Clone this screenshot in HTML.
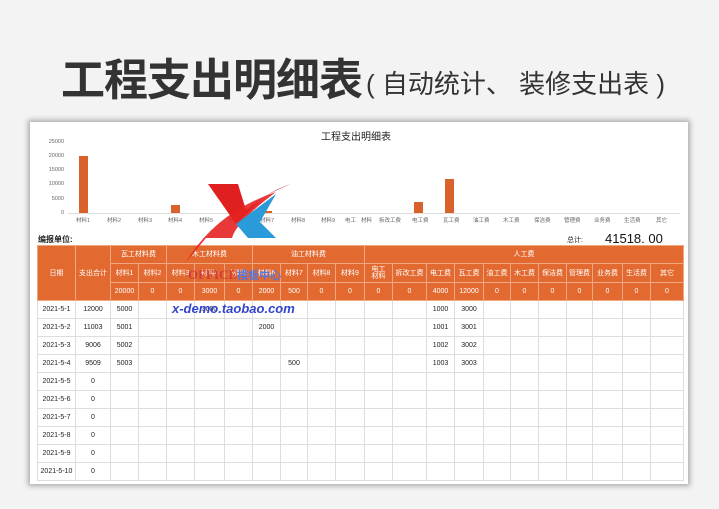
<!DOCTYPE html>
<html><head><meta charset="utf-8"><style>
*{margin:0;padding:0;box-sizing:border-box}
body{width:719px;height:509px;background:#f3f3f3;font-family:"Liberation Sans","Noto Sans CJK SC",sans-serif;position:relative;overflow:hidden}
.a{position:absolute;white-space:nowrap}
#card{position:absolute;left:30px;top:122px;width:658px;height:362px;background:#fff;box-shadow:0 0 5px 2px #aaa}
table{position:absolute;left:37px;top:245px;border-collapse:collapse;table-layout:fixed;font-size:7px;line-height:7px}
td{text-align:center;vertical-align:middle;border:1px solid #ddd;color:#222;height:18px;overflow:hidden;white-space:nowrap;padding:0}
tr.h td{background:#e2692f;color:#fff;border:1px solid #f0a67e}
.yl{font-size:5.5px;color:#666;text-align:right;width:20px}
.xl{font-size:5.5px;color:#666}
.bar{position:absolute;background:#d9622b}
</style></head><body>
<div class="a" style="left:61px;top:44px;font-size:44px;font-weight:bold;color:#333;letter-spacing:-1px">工程支出明细表</div>
<div class="a" style="left:366px;top:64px;font-size:26px;color:#333">( 自动统计、 装修支出表 )</div>
<div id="card"></div>
<div class="a" style="left:321px;top:128px;font-size:10px;color:#222">工程支出明细表</div>
<div class="a yl" style="left:44px;top:139px">25000</div>
<div class="a yl" style="left:44px;top:153px">20000</div>
<div class="a yl" style="left:44px;top:167px">15000</div>
<div class="a yl" style="left:44px;top:181px">10000</div>
<div class="a yl" style="left:44px;top:196px">5000</div>
<div class="a yl" style="left:44px;top:210px">0</div>
<div class="a" style="left:68px;top:213px;width:612px;height:1px;background:#ddd"></div>
<div class="bar" style="left:79px;top:156px;width:9px;height:57px"></div>
<div class="bar" style="left:171px;top:205px;width:9px;height:8px"></div>
<div class="bar" style="left:263px;top:211px;width:9px;height:2px"></div>
<div class="bar" style="left:414px;top:202px;width:9px;height:11px"></div>
<div class="bar" style="left:445px;top:179px;width:9px;height:34px"></div>
<div class="a xl" style="left:76px;top:216px">材料1</div>
<div class="a xl" style="left:107px;top:216px">材料2</div>
<div class="a xl" style="left:138px;top:216px">材料3</div>
<div class="a xl" style="left:168px;top:216px">材料4</div>
<div class="a xl" style="left:199px;top:216px">材料5</div>
<div class="a xl" style="left:229px;top:216px">材料6</div>
<div class="a xl" style="left:260px;top:216px">材料7</div>
<div class="a xl" style="left:291px;top:216px">材料8</div>
<div class="a xl" style="left:321px;top:216px">材料9</div>
<div class="a xl" style="left:345px;top:216px">电工</div>
<div class="a xl" style="left:361px;top:216px">材料</div>
<div class="a xl" style="left:379px;top:216px">拆改工费</div>
<div class="a xl" style="left:412px;top:216px">电工费</div>
<div class="a xl" style="left:443px;top:216px">瓦工费</div>
<div class="a xl" style="left:473px;top:216px">油工费</div>
<div class="a xl" style="left:503px;top:216px">木工费</div>
<div class="a xl" style="left:534px;top:216px">保洁费</div>
<div class="a xl" style="left:564px;top:216px">管理费</div>
<div class="a xl" style="left:594px;top:216px">业务费</div>
<div class="a xl" style="left:624px;top:216px">生活费</div>
<div class="a xl" style="left:656px;top:216px">其它</div>
<div class="a" style="left:38px;top:234px;font-size:8px;font-weight:bold;color:#222">编报单位:</div>
<div class="a" style="left:567px;top:235px;font-size:7px;color:#222">总计:</div>
<div class="a" style="left:605px;top:231px;font-size:13px;color:#111">41518. 00</div>
<table>
<colgroup><col style="width:38px"><col style="width:35px"><col style="width:28px"><col style="width:28px"><col style="width:28px"><col style="width:30px"><col style="width:28px"><col style="width:28px"><col style="width:27px"><col style="width:28px"><col style="width:29px"><col style="width:28px"><col style="width:34px"><col style="width:28px"><col style="width:29px"><col style="width:27px"><col style="width:28px"><col style="width:28px"><col style="width:26px"><col style="width:30px"><col style="width:28px"><col style="width:33px"></colgroup>
<tr class="h"><td rowspan="3">日期</td><td rowspan="3">支出合计</td><td colspan="2" style="height:16px">瓦工材料费</td><td colspan="3">木工材料费</td><td colspan="4">油工材料费</td><td colspan="11">人工费</td></tr>
<tr class="h"><td style="height:19px">材料1</td><td>材料2</td><td>材料3</td><td>材料4</td><td>材料5</td><td>材料6</td><td>材料7</td><td>材料8</td><td>材料9</td><td style="line-height:7px">电工<br>材料</td><td>拆改工费</td><td>电工费</td><td>瓦工费</td><td>油工费</td><td>木工费</td><td>保洁费</td><td>管理费</td><td>业务费</td><td>生活费</td><td>其它</td></tr>
<tr class="h"><td style="height:13px">20000</td><td>0</td><td>0</td><td>3000</td><td>0</td><td>2000</td><td>500</td><td>0</td><td>0</td><td>0</td><td>0</td><td>4000</td><td>12000</td><td>0</td><td>0</td><td>0</td><td>0</td><td>0</td><td>0</td><td>0</td></tr>
<tr><td>2021-5-1</td><td>12000</td><td>5000</td><td></td><td></td><td>3000</td><td></td><td></td><td></td><td></td><td></td><td></td><td></td><td>1000</td><td>3000</td><td></td><td></td><td></td><td></td><td></td><td></td><td></td></tr>
<tr><td>2021-5-2</td><td>11003</td><td>5001</td><td></td><td></td><td></td><td></td><td>2000</td><td></td><td></td><td></td><td></td><td></td><td>1001</td><td>3001</td><td></td><td></td><td></td><td></td><td></td><td></td><td></td></tr>
<tr><td>2021-5-3</td><td>9006</td><td>5002</td><td></td><td></td><td></td><td></td><td></td><td></td><td></td><td></td><td></td><td></td><td>1002</td><td>3002</td><td></td><td></td><td></td><td></td><td></td><td></td><td></td></tr>
<tr><td>2021-5-4</td><td>9509</td><td>5003</td><td></td><td></td><td></td><td></td><td></td><td>500</td><td></td><td></td><td></td><td></td><td>1003</td><td>3003</td><td></td><td></td><td></td><td></td><td></td><td></td><td></td></tr>
<tr><td>2021-5-5</td><td>0</td><td></td><td></td><td></td><td></td><td></td><td></td><td></td><td></td><td></td><td></td><td></td><td></td><td></td><td></td><td></td><td></td><td></td><td></td><td></td><td></td></tr>
<tr><td>2021-5-6</td><td>0</td><td></td><td></td><td></td><td></td><td></td><td></td><td></td><td></td><td></td><td></td><td></td><td></td><td></td><td></td><td></td><td></td><td></td><td></td><td></td><td></td></tr>
<tr><td>2021-5-7</td><td>0</td><td></td><td></td><td></td><td></td><td></td><td></td><td></td><td></td><td></td><td></td><td></td><td></td><td></td><td></td><td></td><td></td><td></td><td></td><td></td><td></td></tr>
<tr><td>2021-5-8</td><td>0</td><td></td><td></td><td></td><td></td><td></td><td></td><td></td><td></td><td></td><td></td><td></td><td></td><td></td><td></td><td></td><td></td><td></td><td></td><td></td><td></td></tr>
<tr><td>2021-5-9</td><td>0</td><td></td><td></td><td></td><td></td><td></td><td></td><td></td><td></td><td></td><td></td><td></td><td></td><td></td><td></td><td></td><td></td><td></td><td></td><td></td><td></td></tr>
<tr><td>2021-5-10</td><td>0</td><td></td><td></td><td></td><td></td><td></td><td></td><td></td><td></td><td></td><td></td><td></td><td></td><td></td><td></td><td></td><td></td><td></td><td></td><td></td><td></td></tr>
</table>
<svg class="a" style="left:176px;top:182px" width="115" height="80" viewBox="0 0 115 80">
<path d="M32 2 L62 2 L70 28 L86 18 L60 42 Z" fill="#e02020"/>
<path d="M62 42 Q70 20 115 2 Q90 10 70 30 L62 42 Z" fill="#c81e30"/>
<path d="M10 80 Q40 30 100 10 Q60 40 56 56 L30 56 Z" fill="#e52222" opacity="0.9"/>
<path d="M60 42 L100 12 L84 40 L100 56 L72 56 Z" fill="#2a9ad8"/>
</svg>
<div class="a" style="left:188px;top:267px;font-size:13px;font-weight:bold;color:#d03a3a;font-family:'Liberation Serif',serif">OFFICE<span style="color:#5577dd;font-family:'Noto Sans CJK SC',sans-serif;font-size:11px">模板中心</span></div>
<div class="a" style="left:172px;top:301px;font-size:13px;font-weight:bold;font-style:italic;color:#3344cc">x-demo.taobao.com</div>
</body></html>
